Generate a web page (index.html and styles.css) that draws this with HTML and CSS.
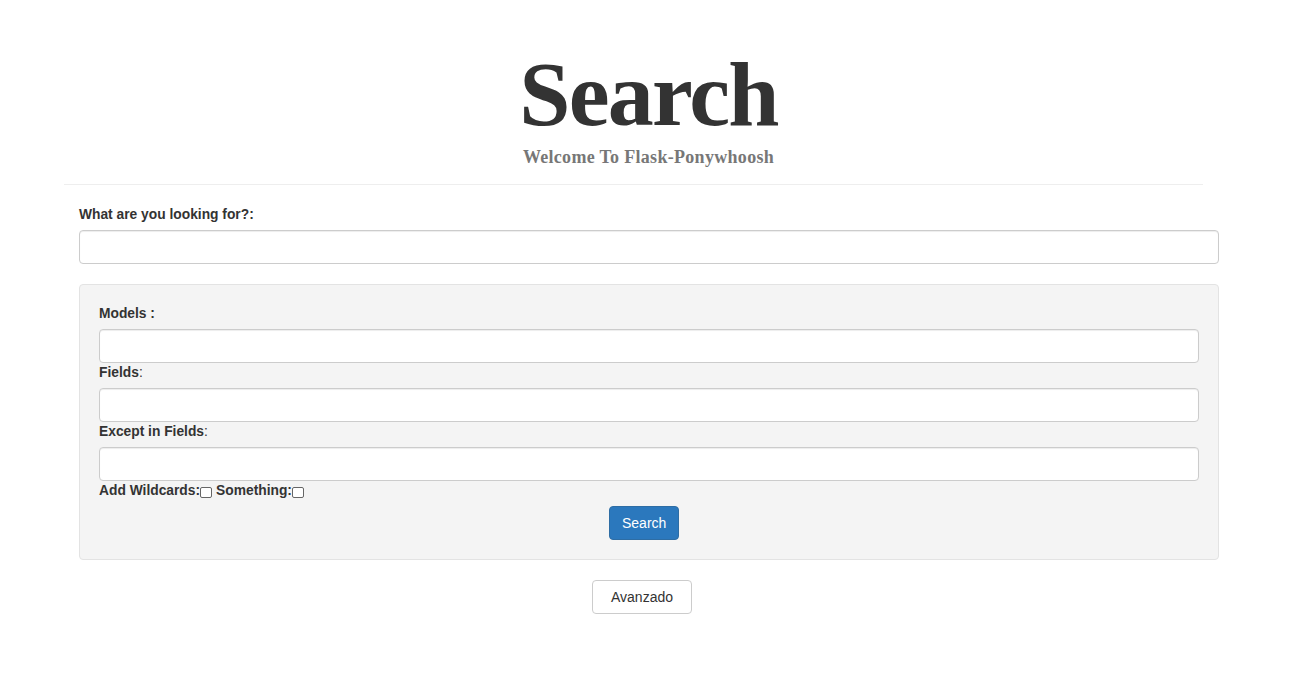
FILE: index.html
```html
<!DOCTYPE html>
<html>
<head>
<meta charset="utf-8">
<title>Search</title>
<link rel="stylesheet" href="styles.css">
</head>
<body>
<header class="page-header">
  <h1 class="title">Search</h1>
  <p class="subtitle">Welcome To Flask-Ponywhoosh</p>
</header>
<form class="search-form">
  <div class="group">
    <label class="lbl">What are you looking for?:</label>
    <input class="field" type="text">
  </div>
  <div class="well">
    <label class="lbl">Models :</label>
    <input class="field" type="text">
    <label class="lbl">Fields<span class="thin">:</span></label>
    <input class="field" type="text">
    <label class="lbl">Except in Fields<span class="thin">:</span></label>
    <input class="field" type="text">
    <div class="checks">
      <label class="lbl">Add Wildcards:</label><input class="box" type="checkbox">
      <label class="lbl">Something:</label><input class="box" type="checkbox">
    </div>
    <div class="center">
      <button class="btn btn-primary" type="button">Search</button>
    </div>
  </div>
  <div class="center">
    <button class="btn btn-default" type="button">Avanzado</button>
  </div>
</form>
</body>
</html>
```
FILE: styles.css
```css
html, body {
  margin: 0;
  padding: 0;
  background: #fff;
}
body {
  font-family: "Liberation Sans", Arial, sans-serif;
  font-size: 14px;
  line-height: 20px;
  color: #333;
}
.page-header {
  margin: 0 104px 0 64px;
  padding: 49px 0 17px 30px;
  border-bottom: 1px solid #eee;
  text-align: center;
}
.title {
  margin: 0;
  font-family: "Liberation Serif", "Times New Roman", serif;
  font-weight: bold;
  font-size: 92px;
  line-height: 90px;
  letter-spacing: -1.8px;
  color: #333;
}
.subtitle {
  margin: 8px 0 0;
  font-family: "Liberation Serif", "Times New Roman", serif;
  font-weight: bold;
  font-size: 18px;
  line-height: 20px;
  color: #777;
  letter-spacing: 0.3px;
}
.search-form {
  margin: 19px 88px 0 79px;
}
.group {
  margin-bottom: 20px;
}
.lbl {
  display: inline-block;
  font-weight: bold;
  font-size: 13.8px;
  line-height: 20px;
}
.group > .lbl,
.well > .lbl {
  margin-bottom: 5px;
}
.thin {
  font-weight: normal;
}
.field {
  display: block;
  box-sizing: border-box;
  width: 100%;
  height: 34px;
  margin: 0;
  padding: 6px 12px;
  border: 1px solid #ccc;
  border-radius: 4px;
  background: #fff;
  font: inherit;
  box-shadow: inset 0 1px 1px rgba(0,0,0,.075);
}
.well {
  display: flex;
  flex-direction: column;
  align-items: flex-start;
  padding: 19px;
  background: #f4f4f4;
  border: 1px solid #e3e3e3;
  border-radius: 4px;
  margin-bottom: 20px;
}
.checks {
  display: flex;
  align-items: center;
  height: 20px;
}
.box {
  -webkit-appearance: none;
  appearance: none;
  width: 12px;
  height: 11px;
  margin: 2px 4px 0 0;
  border: 1px solid #666;
  border-radius: 2px;
  background: #fff;
  box-sizing: border-box;
}
.center {
  display: flex;
  justify-content: center;
  align-self: stretch;
}
.well .center {
  margin-top: 5px;
}
.btn {
  height: 34px;
  padding: 6px 12px;
  border-radius: 4px;
  font-family: "Liberation Sans", Arial, sans-serif;
  font-size: 14px;
  line-height: 20px;
  cursor: pointer;
}
.btn-primary {
  width: 70px;
  margin-right: 10px;
  background: #2b78bd;
  border: 1px solid #2e6da4;
  color: #fff;
}
.btn-default {
  width: 100px;
  margin-right: 14px;
  background: #fff;
  border: 1px solid #ccc;
  color: #333;
}
```
